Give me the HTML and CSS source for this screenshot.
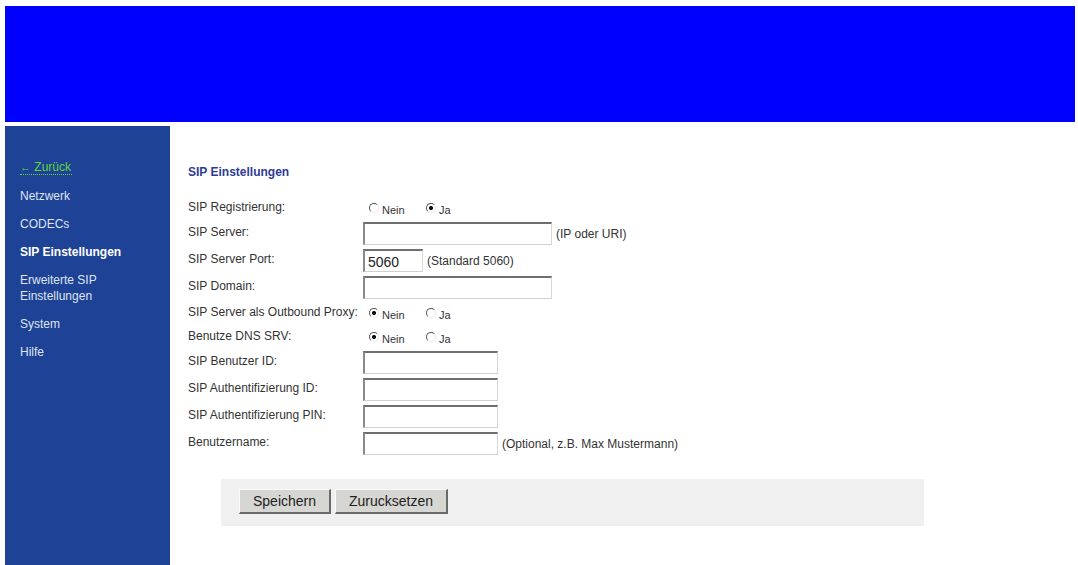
FILE: index.html
```html
<!DOCTYPE html>
<html>
  <head>
    <meta charset="utf-8">
    <link rel="stylesheet" href="styles.css">
  </head>
  <body>
    <div class="header"></div>
    <div class="layout">
      <div class="nav">
        <a class="nav__back" href="#"><span class="nav__arrow">&larr;</span> Zurück</a>
        <a class="nav__item" href="#">Netzwerk</a>
        <a class="nav__item" href="#">CODECs</a>
        <a class="nav__item nav__item--active" href="#">SIP Einstellungen</a>
        <a class="nav__item" href="#">Erweiterte SIP<br>Einstellungen</a>
        <a class="nav__item" href="#">System</a>
        <a class="nav__item" href="#">Hilfe</a>
      </div>
      <div class="content">
        <h1 class="content__title">SIP Einstellungen</h1>
        <table class="form">
          <tbody>
          <tr class="form__row--radio">
            <td class="form__label">SIP Registrierung:</td>
            <td>
              <label class="radio"><input type="radio" name="reg"><span>Nein</span></label>
              <label class="radio"><input type="radio" name="reg" checked><span>Ja</span></label>
            </td>
          </tr>
          <tr class="form__row">
            <td class="form__label">SIP Server:</td>
            <td><input class="field field--wide" type="text"><span class="note">(IP oder URI)</span></td>
          </tr>
          <tr class="form__row">
            <td class="form__label">SIP Server Port:</td>
            <td><input class="field field--port" type="text" value="5060"><span class="note">(Standard 5060)</span></td>
          </tr>
          <tr class="form__row">
            <td class="form__label">SIP Domain:</td>
            <td><input class="field field--wide" type="text"></td>
          </tr>
          <tr class="form__row--radio">
            <td class="form__label">SIP Server als Outbound Proxy:</td>
            <td>
              <label class="radio"><input type="radio" name="proxy" checked><span>Nein</span></label>
              <label class="radio"><input type="radio" name="proxy"><span>Ja</span></label>
            </td>
          </tr>
          <tr class="form__row--radio">
            <td class="form__label">Benutze DNS SRV:</td>
            <td>
              <label class="radio"><input type="radio" name="srv" checked><span>Nein</span></label>
              <label class="radio"><input type="radio" name="srv"><span>Ja</span></label>
            </td>
          </tr>
          <tr class="form__row">
            <td class="form__label">SIP Benutzer ID:</td>
            <td><input class="field" type="text"></td>
          </tr>
          <tr class="form__row">
            <td class="form__label">SIP Authentifizierung ID:</td>
            <td><input class="field" type="text"></td>
          </tr>
          <tr class="form__row">
            <td class="form__label">SIP Authentifizierung PIN:</td>
            <td><input class="field" type="text"></td>
          </tr>
          <tr class="form__row">
            <td class="form__label">Benutzername:</td>
            <td><input class="field" type="text"><span class="note">(Optional, z.B. Max Mustermann)</span></td>
          </tr>
          </tbody>
        </table>
        <div class="buttons">
          <button class="button button--save">Speichern</button>
          <button class="button button--reset">Zurucksetzen</button>
        </div>
      </div>
    </div>
  </body>
</html>
```

FILE: styles.css
```css
body {
  margin: 6px 3px 0 5px;
  font-family: "Liberation Sans", Arial, sans-serif;
  font-size: 12px;
  color: #333;
  background: #fff;
}
.header {
  height: 116px;
  background: #0000ff;
}
.layout {
  display: flex;
  margin-top: 4px;
  height: 439px;
}

.nav {
  width: 150px;
  padding: 34px 0 0 15px;
  background: #1e4296;
}
.nav__back,
.nav__item
{
  display: block;
  line-height: 16px;
  margin-bottom: 12px;
  text-decoration: none;
  color: #dfe4f0;
}
.nav__back {
  color: #5fd63a;
  width: 52px;
  border-bottom: 1px dotted #5fd63a;
  line-height: 14px;
  margin-bottom: 13px;
}
.nav__arrow {
  font-size: 11px;
}
.nav__item--active {
  font-weight: bold;
  color: #fff;
}

.content {
  flex: 1;
  padding: 39px 0 0 18px;
}
.content__title {
  margin: 0 0 17px 0;
  font-size: 12px;
  line-height: 14px;
  color: #2e3a9a;
}

.form {
  border-collapse: collapse;
}
.form td {
  padding: 0;
  vertical-align: middle;
  line-height: 14px;
}
.form__row {
  height: 27px;
}
.form__row--radio {
  height: 24px;
}
.form__label {
  width: 175px;
  padding-bottom: 3px !important;
}

.field {
  box-sizing: border-box;
  width: 135px;
  height: 23px;
  margin: 0;
  padding: 2px 3px 0;
  vertical-align: middle;
  background: #fff;
  border-top: 2px solid #6e6e6e;
  border-left: 2px solid #8a8a8a;
  border-right: 1px solid #d8d8d8;
  border-bottom: 1px solid #d0d0d0;
  font-family: "Liberation Sans", Arial, sans-serif;
  font-size: 14px;
  color: #222;
  outline: none;
}
.field--wide {
  width: 189px;
}
.field--port {
  width: 60px;
}
.note {
  margin-left: 4px;
  vertical-align: middle;
}

.radio {
  display: inline-block;
  margin-right: 12px;
}
.radio input {
  appearance: none;
  -webkit-appearance: none;
  box-sizing: border-box;
  width: 10px;
  height: 10px;
  margin: 0 3px 0 6px;
  border-radius: 50%;
  border: 1px solid;
  border-color: #555 #e8e8e8 #e8e8e8 #555;
  background: #fff;
  vertical-align: -1px;
}
.radio input:checked {
  background: radial-gradient(circle, #111 0 1.8px, #fff 2.3px);
}
.radio span {
  font-size: 11px;
  position: relative;
  top: 2px;
}

.buttons {
  box-sizing: border-box;
  width: 703px;
  height: 47px;
  margin: 22px 0 0 33px;
  padding: 10px 18px;
  background: #f0f0f0;
  display: flex;
  gap: 4px;
}
.button {
  box-sizing: border-box;
  height: 25px;
  padding: 0;
  background: #d6d6d2;
  border-top: 1px solid #fafafa;
  border-left: 1px solid #fafafa;
  border-right: 2px solid #6a6a6a;
  border-bottom: 2px solid #6a6a6a;
  font-family: "Liberation Sans", Arial, sans-serif;
  font-size: 14px;
  color: #222;
}
.button--save {
  width: 92px;
}
.button--reset {
  width: 113px;
}
```
